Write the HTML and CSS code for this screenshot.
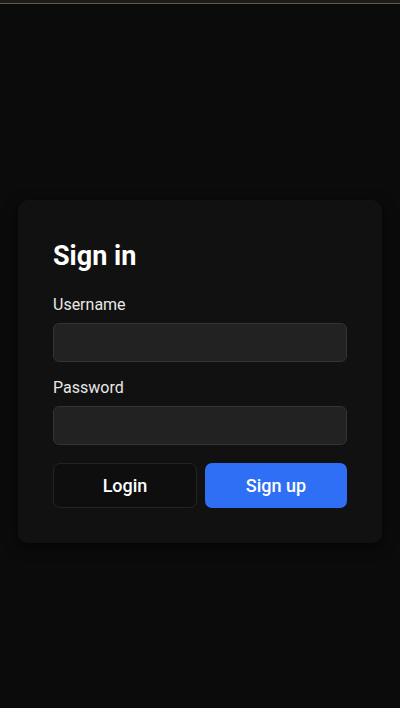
FILE: index.html
```html
<!DOCTYPE html>
<html lang="en">
<head>
    <meta charset="UTF-8">
    <meta name="viewport" content="width=device-width, initial-scale=1.0">
    <title>Sign in</title>
    <link rel="stylesheet" href="styles.css">
</head>
<body>

    <div class="top-bar"></div>

    <!-- Login card -->
    <div class="page">
        <form class="card" onsubmit="return false">
            <h1>Sign in</h1>

            <label for="username">Username</label>
            <input type="text" id="username">

            <label for="password">Password</label>
            <input type="password" id="password">

            <div class="actions">
                <button class="btn-login">Login</button>
                <button class="btn-signup">Sign up</button>
            </div>
        </form>
    </div>

</body>
</html>
```

FILE: styles.css
```css
* {
    box-sizing: border-box;
}

body {
    margin: 0;
    background: #0b0b0b;
    color: #f2f2f2;
    font-family: Roboto, 'Liberation Sans', sans-serif;
    height: 708px;
    overflow: hidden;
}

.top-bar {
    height: 4px;
    background: #1e1a17;
    border-bottom: 1px solid #5c5852;
}

/* Page */
.page {
    padding: 196px 18px 0;
}

.card {
    display: flex;
    flex-direction: column;
    background: #111111;
    border-radius: 10px;
    padding: 40px 35px 35px;
    box-shadow: 0 4px 14px rgba(0, 0, 0, 0.6);
}

.card h1 {
    margin: 0 0 23px;
    font-size: 27px;
    font-weight: 700;
    line-height: 32px;
    color: #ffffff;
}

.card label {
    font-size: 16px;
    line-height: 1.2;
    margin-bottom: 9px;
    color: #e8e8e8;
}

.card input {
    height: 39px;
    background: #222222;
    border: 1px solid #333333;
    border-radius: 6px;
    margin-bottom: 16px;
    color: white;
    font-size: 16px;
    padding: 0 12px;
    outline: none;
}

.card input#password {
    margin-bottom: 18px;
}

/* Buttons */
.actions {
    display: flex;
    gap: 8px;
}

.actions button {
    flex: 1;
    height: 45px;
    border-radius: 7px;
    font-family: inherit;
    font-size: 18px;
    font-weight: 500;
    color: #ffffff;
    cursor: pointer;
}

.btn-login {
    background: #0e0e0e;
    border: 1px solid #242424;
}

.btn-signup {
    background: #2f6ff6;
    border: none;
}
```
